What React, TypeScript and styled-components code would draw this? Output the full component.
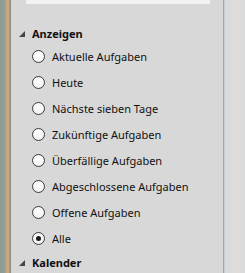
import React from "react";
import styled, { createGlobalStyle } from "styled-components";

const Global = createGlobalStyle`
  html, body { margin: 0; padding: 0; }
  body { width: 245px; height: 273px; overflow: hidden; font-family: "Segoe UI", "Noto Sans", "Open Sans", sans-serif; }
`;

const Root = styled.div`
  display: flex;
  width: 245px;
  height: 273px;
  overflow: hidden;
`;

const Desktop = styled.div`
  width: 11px;
  flex: none;
  background: linear-gradient(
    to right,
    #8e9a92 0px,
    #93a096 5px,
    #c2a582 6px,
    #c9ab86 9px,
    #8c8472 10px,
    #9a9488 11px
  );
`;

const Panel = styled.div`
  flex: 1;
  display: flex;
  flex-direction: column;
  background: #d8d8d8;
`;

const TopBox = styled.div`
  height: 5px;
  margin: 0 13px 0 15px;
  background: #f2f2f2;
`;

const Header = styled.div`
  display: flex;
  align-items: center;
  height: 26px;
  padding-left: 8px;
  font-weight: 700;
  font-size: 11px;
  color: #111;
`;

const FirstHeader = styled(Header)`
  margin-top: 19px;
  height: 24px;
`;

const Tri = styled.svg`
  width: 6px;
  height: 6px;
  margin-right: 7px;
  margin-top: 1px;
`;

const List = styled.div`
  display: flex;
  flex-direction: column;
`;

const Row = styled.label`
  display: flex;
  align-items: center;
  height: 26px;
  padding-left: 21px;
  font-size: 11px;
  color: #111;
`;

const Radio = styled.span<{ $checked?: boolean }>`
  box-sizing: border-box;
  width: 13px;
  height: 13px;
  border-radius: 50%;
  border: 1px solid #3c3c3c;
  background: radial-gradient(circle at 50% 40%, #ffffff 0%, #f4f4f4 60%, #e2e2e2 100%);
  margin-right: 7px;
  display: flex;
  align-items: center;
  justify-content: center;
  flex: none;
  &::after {
    content: "";
    display: ${(p) => (p.$checked ? "block" : "none")};
    width: 5px;
    height: 5px;
    border-radius: 50%;
    background: #1a1a1a;
  }
`;

const Divider = styled.div`
  width: 1px;
  flex: none;
  background: #9ea6ae;
`;

const Side = styled.div`
  width: 21px;
  flex: none;
  background: linear-gradient(
    to right,
    #c6ccd2 0px,
    #d9dde2 2px,
    #dadada 4px,
    #dcdcdc 8px,
    #e0dcd6 12px,
    #dcdcdc 15px,
    #d9d9d9 21px
  );
`;

function Triangle() {
  return (
    <Tri viewBox="0 0 6 6">
      <polygon points="6,0 6,6 0,6" fill="#444" />
    </Tri>
  );
}

const items = [
  "Aktuelle Aufgaben",
  "Heute",
  "Nächste sieben Tage",
  "Zukünftige Aufgaben",
  "Überfällige Aufgaben",
  "Abgeschlossene Aufgaben",
  "Offene Aufgaben",
  "Alle",
];

export default function App() {
  return (
    <>
      <Global />
      <Root>
        <Desktop />
        <Panel>
          <TopBox />
          <FirstHeader>
            <Triangle />
            Anzeigen
          </FirstHeader>
          <List>
            {items.map((t) => (
              <Row key={t}>
                <Radio $checked={t === "Alle"} />
                {t}
              </Row>
            ))}
          </List>
          <Header>
            <Triangle />
            Kalender
          </Header>
        </Panel>
        <Divider />
        <Side />
      </Root>
    </>
  );
}
